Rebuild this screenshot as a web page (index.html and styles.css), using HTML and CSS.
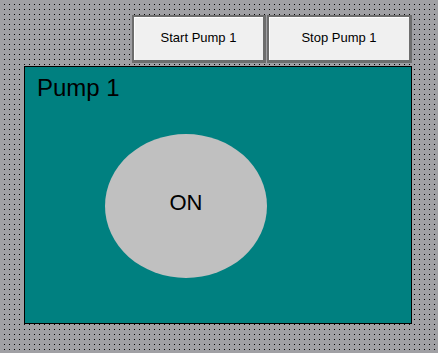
FILE: index.html
```html
<!DOCTYPE html>
<html lang="en">
<head>
    <meta charset="UTF-8">
    <title>Pump 1</title>
    <link rel="stylesheet" href="styles.css">
</head>
<body>
    <div class="button-container">
        <button type="button" id="start-btn" class="pump-btn">Start Pump 1</button>
        <button type="button" id="stop-btn" class="pump-btn">Stop Pump 1</button>
    </div>

    <div class="pump-panel">
        <div class="pump-title">Pump 1</div>
        <div class="pump-state">ON</div>
    </div>
</body>
</html>
```

FILE: styles.css
```css
html,
body {
  margin: 0;
  height: 353px;
}

body {
  font-family: "Liberation Sans", Arial, sans-serif;
  background-color: #a0a0a4;
  /* form designer grid: one black pixel every 5px */
  background-image: conic-gradient(from 270deg at 1px 1px, #000 90deg, #a0a0a4 0);
  background-size: 5px 5px;
  background-position: 4px 4px;
  overflow: hidden;
}

.button-container {
  display: flex;
  gap: 1px;
  padding: 15px 0 0 132px;
}

.pump-btn {
  box-sizing: border-box;
  height: 48px;
  margin: 0;
  padding: 0 0 2px 0;
  font-family: "Liberation Sans", Arial, sans-serif;
  font-size: 13px;
  color: #000;
  background: #f0f0f0;
  border: 2px solid #6d6d6d;
  border-right-width: 3px;
  border-bottom-width: 3px;
  border-radius: 0;
  box-shadow: inset 1px 1px #fff;
}

#start-btn {
  width: 134px;
}

#stop-btn {
  width: 145px;
}

.pump-panel {
  box-sizing: border-box;
  width: 388px;
  height: 258px;
  margin: 3px 0 0 24px;
  padding: 7px 0 0 0;
  background: #008080;
  border: 1px solid #000;
}

.pump-title {
  margin-left: 12px;
  font-size: 24px;
  line-height: 28px;
  color: #000;
}

.pump-state {
  display: flex;
  align-items: center;
  justify-content: center;
  box-sizing: border-box;
  width: 162px;
  height: 144px;
  margin: 32px 0 0 80px;
  padding-bottom: 6px;
  border-radius: 50%;
  background: #c0c0c0;
  font-size: 22px;
  color: #000;
}
```
